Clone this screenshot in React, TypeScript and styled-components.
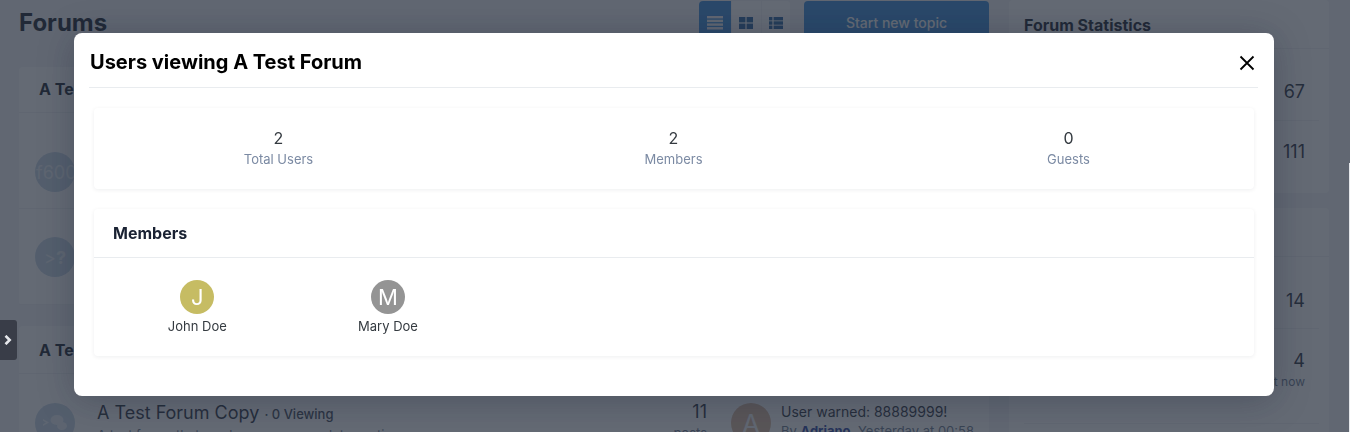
import React from "react";
import styled, { createGlobalStyle } from "styled-components";

const Global = createGlobalStyle`
  html, body { margin: 0; padding: 0; height: 432px; overflow: hidden; background: #f3f4f6; }
  * { box-sizing: border-box; }
  body { font-family: Inter, "Liberation Sans", sans-serif; color: #1f2937; }
`;

const Page = styled.div`
  display: flex;
  gap: 20px;
  height: 432px;
  overflow: hidden;
  padding-left: 19px;
`;
const Main = styled.main`
  width: 970px;
  flex: none;
  display: flex;
  flex-direction: column;
`;
const TopBar = styled.div`
  display: flex;
  flex: none;
  justify-content: space-between;
  align-items: flex-start;
  height: 67px;
  padding-top: 1px;
`;
const PageTitle = styled.h1`
  margin: 7px 0 0;
  font-size: 24px;
  line-height: 29px;
  font-weight: 700;
  color: #111827;
`;
const Actions = styled.div`
  display: flex;
  gap: 14px;
`;
const Switch = styled.div`
  display: flex;
  width: 91px;
  height: 44px;
  background: #fff;
  border-radius: 4px;
  overflow: hidden;
`;
const SwitchButton = styled.div<{ $active?: boolean }>`
  flex: ${(p) => (p.$active ? "0 0 32px" : "1")};
  display: flex;
  justify-content: center;
  padding-top: 15px;
  border-left: ${(p) => (p.$active ? "none" : "1px solid #f3f4f6")};
  background: ${(p) => (p.$active ? "#3087da" : "#fff")};
  color: ${(p) => (p.$active ? "#f3f4f6" : "#1f5f9e")};
`;
const StartButton = styled.div`
  width: 185px;
  height: 44px;
  padding-top: 13px;
  text-align: center;
  font-size: 14px;
  line-height: 18px;
  font-weight: 500;
  color: #fff;
  background: #3087da;
  border-radius: 4px;
`;
const Card = styled.section<{ $height: number }>`
  background: #fff;
  border-radius: 4px;
  height: ${(p) => p.$height}px;
  flex: none;
  margin-bottom: 21px;
`;
const CardHead = styled.div<{ $height: number; $lift: number }>`
  height: ${(p) => p.$height}px;
  padding: 0 0 ${(p) => p.$lift}px 20px;
  display: flex;
  align-items: center;
  font-size: 16px;
  font-weight: 700;
  color: #111827;
  border-bottom: 1px solid #f0f1f3;
`;
const ForumRow = styled.div<{ $height: number; $top: number }>`
  height: ${(p) => p.$height}px;
  padding: ${(p) => p.$top}px 0 0 16px;
  border-bottom: 1px solid #f0f1f3;
`;
const ForumIcon = styled.div<{ $start?: boolean }>`
  width: 40px;
  height: 40px;
  border-radius: 50%;
  background: #c4d5e6;
  color: #e8eef4;
  font-size: 18px;
  font-weight: 400;
  display: flex;
  align-items: center;
  justify-content: ${(p) => (p.$start ? "flex-start" : "center")};
  padding-left: ${(p) => (p.$start ? "1px" : "0")};
  flex: none;
  white-space: nowrap;
`;
const Glyph = styled.span`
  font-weight: 700;
`;
const LastRow = styled.div`
  display: flex;
  padding: 29px 0 0 16px;
`;
const RowIcon = styled(ForumIcon)`
  margin: 0 22px 0 0;
  font-size: 15px;
`;
const RowBody = styled.div`
  flex: 1;
  margin-top: -2px;
`;
const RowTitle = styled.div`
  font-size: 18px;
  line-height: 24px;
  color: #1f2937;
  span { font-size: 13px; font-weight: 500; color: #374151; }
`;
const RowDesc = styled.div`
  font-size: 13px;
  line-height: 18px;
  color: #64748b;
`;
const RowStats = styled.div`
  width: 60px;
  text-align: right;
  font-size: 18px;
  line-height: 24px;
  margin: -3px 24px 0 0;
  small { display: block; font-size: 13px; line-height: 18px; color: #64748b; }
`;
const PosterAvatar = styled.div`
  width: 40px;
  height: 40px;
  border-radius: 50%;
  background: #d8b59a;
  color: #f3f4f6;
  font-size: 26px;
  display: flex;
  align-items: center;
  justify-content: center;
  flex: none;
  margin-right: 10px;
`;
const LastPost = styled.div`
  width: 208px;
  font-size: 14px;
  line-height: 18px;
  small { display: block; font-size: 13px; color: #64748b; margin-top: 1px; }
  b { color: #1e3a9f; font-weight: 700; }
`;
const Side = styled.aside`
  width: 320px;
  flex: none;
  display: flex;
  flex-direction: column;
`;
const SideCard = styled.section<{ $height: number }>`
  background: #fff;
  border-radius: 4px;
  height: ${(p) => p.$height}px;
  flex: none;
  margin-bottom: 15px;
`;
const SideHead = styled.div<{ $height: number }>`
  height: ${(p) => p.$height}px;
  padding: 1px 15px 0;
  display: flex;
  align-items: center;
  font-size: 16px;
  font-weight: 700;
  color: #111827;
  border-bottom: 1px solid #f0f1f3;
`;
const StatRow = styled.div<{ $height: number; $nudge: number; $plain?: boolean }>`
  height: ${(p) => p.$height}px;
  margin: 0 10px 0 15px;
  padding: ${(p) => (p.$nudge > 0 ? p.$nudge : 0)}px 14px ${(p) => (p.$nudge < 0 ? -p.$nudge : 0)}px 0;
  display: flex;
  flex-direction: column;
  justify-content: center;
  align-items: flex-end;
  font-size: 18px;
  line-height: 24px;
  color: #1f2937;
  border-bottom: ${(p) => (p.$plain ? "none" : "1px solid #f0f1f3")};
  small { margin-top: 1px; font-size: 12px; line-height: 16px; color: #64748b; }
`;

const Overlay = styled.div`
  position: fixed;
  inset: 0;
  z-index: 10;
  background: rgba(40, 48, 62, 0.72);
  display: flex;
  justify-content: center;
  align-items: flex-start;
  padding: 33px 2px 0 0;
`;
const ScrollTrack = styled.div`
  position: absolute;
  right: 0;
  top: 163px;
  bottom: 0;
  width: 1px;
  background: #e5e7eb;
`;
const Modal = styled.div`
  width: 1200px;
  height: 363px;
  background: #fff;
  border-radius: 8px;
  padding: 0 16px 0 15px;
  box-shadow: 0 4px 36px rgba(15, 23, 42, 0.28);
`;
const ModalHead = styled.header`
  height: 55px;
  display: flex;
  justify-content: space-between;
  align-items: center;
  border-bottom: 1px solid #e9ecef;
`;
const ModalTitle = styled.h2`
  margin: 4px 0 0 1px;
  font-size: 20px;
  line-height: 24px;
  font-weight: 700;
  color: #000;
`;
const Close = styled.svg`
  width: 16px;
  height: 16px;
  margin: 6px 3px 0 0;
`;
const Panel = styled.section`
  margin: 0 4px 0 5px;
  background: #fff;
  border-radius: 4px;
  box-shadow: 0 1px 4px rgba(15, 23, 42, 0.07);
`;
const StatsPanel = styled(Panel)`
  margin-top: 20px;
  height: 81px;
  padding-top: 20px;
`;
const StatsGrid = styled.div`
  display: grid;
  grid-template-columns: repeat(3, 395px);
  margin-left: -13px;
`;
const Stat = styled.div`
  text-align: center;
`;
const StatValue = styled.div`
  font-size: 16px;
  line-height: 20px;
  color: #343a40;
`;
const StatLabel = styled.div`
  margin-top: 1px;
  font-size: 13px;
  line-height: 20px;
  color: #7b8aa3;
`;
const MembersPanel = styled(Panel)`
  margin-top: 20px;
  height: 147px;
`;
const MembersHead = styled.div`
  height: 49px;
  padding-left: 19px;
  display: flex;
  align-items: center;
  font-size: 16px;
  font-weight: 700;
  color: #1a2233;
  border-bottom: 1px solid #e9ecef;
`;
const MemberGrid = styled.div`
  display: grid;
  grid-template-columns: repeat(6, 1fr);
  padding: 22px 8px 0;
`;
const Member = styled.div`
  display: flex;
  flex-direction: column;
  align-items: center;
`;
const MemberAvatar = styled.div<{ $color: string }>`
  width: 34px;
  height: 34px;
  border-radius: 50%;
  background: ${(p) => p.$color};
  color: #fff;
  font-size: 22px;
  line-height: 34px;
  text-align: center;
`;
const MemberName = styled.div`
  margin-top: 2px;
  font-size: 13px;
  line-height: 20px;
  color: #343a40;
`;
const Toggle = styled.div`
  position: fixed;
  z-index: 20;
  left: 0;
  top: 320px;
  width: 17px;
  height: 40px;
  padding-right: 2px;
  background: #393d48;
  border-radius: 0 3px 3px 0;
  color: #e5e7eb;
  display: flex;
  align-items: center;
  justify-content: center;
`;

const Chevron = () => (
  <svg width="8" height="10" viewBox="0 0 8 10" fill="none" stroke="currentColor" strokeWidth="2.6">
    <path d="M1.5 0.8 5.7 5 1.5 9.2" />
  </svg>
);
const Lines = () => (
  <svg width="16" height="14" viewBox="0 0 16 14" fill="currentColor">
    <rect y="0" width="16" height="2.4" /><rect y="3.7" width="16" height="2.4" />
    <rect y="7.4" width="16" height="2.4" /><rect y="11.1" width="16" height="2.4" />
  </svg>
);
const Tiles = () => (
  <svg width="14" height="14" viewBox="0 0 14 14" fill="currentColor">
    <rect x="0" y="1" width="6.4" height="5.4" /><rect x="7.6" y="1" width="6.4" height="5.4" />
    <rect x="0" y="7.6" width="6.4" height="5.4" /><rect x="7.6" y="7.6" width="6.4" height="5.4" />
  </svg>
);
const ListIcon = () => (
  <svg width="14" height="14" viewBox="0 0 14 14" fill="currentColor">
    <rect x="0" y="1" width="3.4" height="3.4" /><rect x="4.6" y="1" width="9.4" height="3.4" />
    <rect x="0" y="5.3" width="3.4" height="3.4" /><rect x="4.6" y="5.3" width="9.4" height="3.4" />
    <rect x="0" y="9.6" width="3.4" height="3.4" /><rect x="4.6" y="9.6" width="9.4" height="3.4" />
  </svg>
);
const Bubbles = () => (
  <svg width="26" height="18" viewBox="0 0 26 18" fill="currentColor">
    <path d="M1 5l6 3.5L1 12v-1.8L4 8.5 1 6.8z" />
    <ellipse cx="15" cy="6" rx="6.5" ry="5" />
    <ellipse cx="20" cy="12" rx="5" ry="4" />
  </svg>
);

export default function App() {
  return (
    <>
      <Global />
      <Page>
        <Main>
          <TopBar>
            <PageTitle>Forums</PageTitle>
            <Actions>
              <Switch>
                <SwitchButton $active><Lines /></SwitchButton>
                <SwitchButton><Tiles /></SwitchButton>
                <SwitchButton><ListIcon /></SwitchButton>
              </Switch>
              <StartButton>Start new topic</StartButton>
            </Actions>
          </TopBar>
          <Card $height={238}>
            <CardHead $height={46} $lift={2}>A Test Category</CardHead>
            <ForumRow $height={96} $top={39}><ForumIcon $start>f600</ForumIcon></ForumRow>
            <ForumRow $height={96} $top={28}><ForumIcon>&gt;<Glyph>?</Glyph></ForumIcon></ForumRow>
          </Card>
          <Card $height={200}>
            <CardHead $height={48} $lift={0}>A Test Category Copy</CardHead>
            <LastRow>
              <RowIcon><Bubbles /></RowIcon>
              <RowBody>
                <RowTitle>A Test Forum Copy <span>· 0 Viewing</span></RowTitle>
                <RowDesc>A test forum that can be a more complete section</RowDesc>
              </RowBody>
              <RowStats>11<small>posts</small></RowStats>
              <PosterAvatar>A</PosterAvatar>
              <LastPost>User warned: 88889999!<small>By <b>Adriano</b>, Yesterday at 00:58</small></LastPost>
            </LastRow>
          </Card>
        </Main>
        <Side>
          <SideCard $height={193}>
            <SideHead $height={49}>Forum Statistics</SideHead>
            <StatRow $height={72} $nudge={14}>67</StatRow>
            <StatRow $height={72} $nudge={-10} $plain>111</StatRow>
          </SideCard>
          <SideCard $height={230}>
            <SideHead $height={49}> </SideHead>
            <StatRow $height={72} $nudge={16}>14</StatRow>
            <StatRow $height={95} $nudge={-13}>4<small>just now</small></StatRow>
          </SideCard>
        </Side>
      </Page>
      <Overlay>
        <Modal>
          <ModalHead>
            <ModalTitle>Users viewing A Test Forum</ModalTitle>
            <Close viewBox="0 0 16 16" fill="none" stroke="#000" strokeWidth="1.8">
              <path d="M1.5 1.5 14.5 14.5M14.5 1.5 1.5 14.5" />
            </Close>
          </ModalHead>
          <StatsPanel>
            <StatsGrid>
              <Stat><StatValue>2</StatValue><StatLabel>Total Users</StatLabel></Stat>
              <Stat><StatValue>2</StatValue><StatLabel>Members</StatLabel></Stat>
              <Stat><StatValue>0</StatValue><StatLabel>Guests</StatLabel></Stat>
            </StatsGrid>
          </StatsPanel>
          <MembersPanel>
            <MembersHead>Members</MembersHead>
            <MemberGrid>
              <Member><MemberAvatar $color="#c6bc63">J</MemberAvatar><MemberName>John Doe</MemberName></Member>
              <Member><MemberAvatar $color="#949494">M</MemberAvatar><MemberName>Mary Doe</MemberName></Member>
            </MemberGrid>
          </MembersPanel>
        </Modal>
        <ScrollTrack />
      </Overlay>
      <Toggle><Chevron /></Toggle>
    </>
  );
}
